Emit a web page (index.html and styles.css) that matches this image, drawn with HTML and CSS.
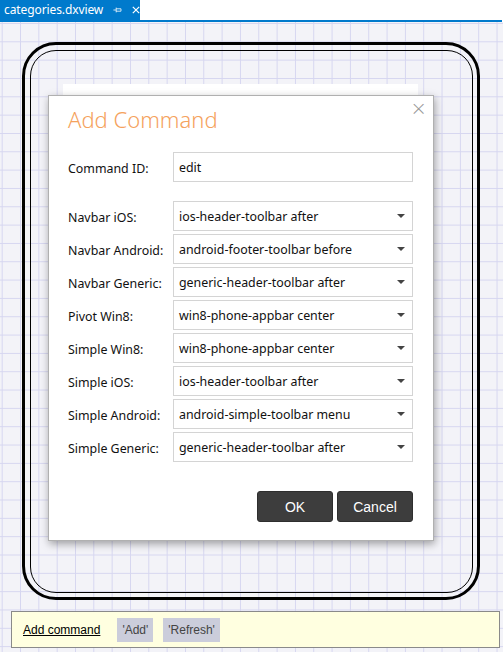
FILE: index.html
```html
<!DOCTYPE html>
<html>
<head>
<meta charset="utf-8">
<link rel="stylesheet" href="styles.css">
</head>
<body>
<div class="tabbar">
  <div class="tab">
    <span class="tab-title">categories.dxview</span>
    <svg class="pin" width="11" height="10" viewBox="0 0 11 10"><path d="M0.5 5h3.5M4 2v6M4 3.5h6v3H4" fill="none" stroke="#fff" stroke-width="1"/></svg>
    <svg class="tab-close" width="10" height="10" viewBox="0 0 10 10"><path d="M1 1l8 8M9 1l-8 8" stroke="#fff" stroke-width="1.5"/></svg>
  </div>
</div>
<div class="canvas">
  <div class="frame-outer">
    <div class="frame-inner">
      <div class="preview"><span class="preview-text">g</span></div>
    </div>
  </div>
  <div class="cmdbar">
    <a class="cmd-link">Add command</a>
    <span class="chip">'Add'</span>
    <span class="chip">'Refresh'</span>
  </div>
  <div class="dialog">
    <div class="dlg-close">×</div>
    <h1 class="dlg-title">Add Command</h1>
    <div class="row id-row">
      <label class="lbl">Command ID:</label>
      <div class="field">edit</div>
    </div>
    <div class="rows">
      <div class="row"><label class="lbl">Navbar iOS:</label><div class="field select">ios-header-toolbar after<span class="caret"></span></div></div>
      <div class="row"><label class="lbl">Navbar Android:</label><div class="field select">android-footer-toolbar before<span class="caret"></span></div></div>
      <div class="row"><label class="lbl">Navbar Generic:</label><div class="field select">generic-header-toolbar after<span class="caret"></span></div></div>
      <div class="row"><label class="lbl">Pivot Win8:</label><div class="field select">win8-phone-appbar center<span class="caret"></span></div></div>
      <div class="row"><label class="lbl">Simple Win8:</label><div class="field select">win8-phone-appbar center<span class="caret"></span></div></div>
      <div class="row"><label class="lbl">Simple iOS:</label><div class="field select">ios-header-toolbar after<span class="caret"></span></div></div>
      <div class="row"><label class="lbl">Simple Android:</label><div class="field select">android-simple-toolbar menu<span class="caret"></span></div></div>
      <div class="row"><label class="lbl">Simple Generic:</label><div class="field select">generic-header-toolbar after<span class="caret"></span></div></div>
    </div>
    <div class="buttons">
      <button class="btn">OK</button>
      <button class="btn">Cancel</button>
    </div>
  </div>
</div>
</body>
</html>
```
FILE: styles.css
```css
* { box-sizing: border-box; }
html, body { margin: 0; padding: 0; }
body {
  width: 503px;
  height: 652px;
  overflow: hidden;
  background: #fff;
  font-family: "Noto Sans", "Open Sans", sans-serif;
  position: relative;
}
.tabbar {
  height: 22px;
  border-bottom: 2px solid #007acc;
  display: flex;
  width: 502px;
}
.tab {
  background: #007acc;
  height: 20px;
  width: 140px;
  display: flex;
  align-items: center;
  padding-left: 4px;
  color: #fff;
}
.tab-title {
  font-size: 12px;
  line-height: 20px;
  letter-spacing: -0.1px;
}
.pin { margin-left: 10px; }
.tab-close { margin-left: 10px; }
.canvas {
  height: 630px;
  background-color: #f3f3f8;
  background-image:
    linear-gradient(to right, #d6d6f0 1px, transparent 1px),
    linear-gradient(to bottom, #d6d6f0 1px, transparent 1px);
  background-size: 18.33px 18.33px;
  background-position: 1.7px 1px;
  padding-top: 20px;
  padding-left: 22px;
}
.frame-outer {
  width: 458px;
  height: 558px;
  border: 3.5px solid #000;
  border-radius: 34px;
  padding: 4.5px;
}
.frame-inner {
  width: 100%;
  height: 100%;
  border: 1.5px solid #000;
  border-radius: 26px;
  padding: 33px 0 0 32px;
}
.preview {
  width: 355px;
  height: 455px;
  background: #fff;
  position: relative;
}
.preview-text {
  position: absolute;
  left: 55px;
  top: 440px;
  font-size: 12px;
  color: #555;
}
.cmdbar {
  margin-top: 11px;
  margin-left: -11px;
  width: 489px;
  height: 37px;
  background: #ffffe0;
  border: 1px solid #8a8a8a;
  display: flex;
  align-items: center;
  padding-left: 11px;
  font-family: "Liberation Sans", Arial, sans-serif;
  font-size: 12px;
  color: #000;
}
.cmd-link {
  text-decoration: underline;
  margin-right: 17px;
}
.chip {
  background: #cbcddb;
  color: #444;
  height: 24px;
  line-height: 24px;
  padding: 0 5px;
  margin-right: 10px;
}
.dialog {
  position: absolute;
  left: 48px;
  top: 95px;
  width: 386px;
  height: 446px;
  background: #fff;
  border: 1px solid #b0b0b0;
  box-shadow: 1px 3px 8px rgba(0,0,0,0.35);
  padding: 0 20px 0 19px;
}
.dlg-close {
  position: absolute;
  right: 6px;
  top: 0px;
  font-size: 20px;
  color: #999;
  font-family: "DejaVu Sans", sans-serif;
  font-weight: 300;
}
.dlg-title {
  margin: 8px 0 0 0;
  font-family: "Noto Sans", sans-serif;
  font-weight: 300;
  font-size: 22px;
  color: #f5a25d;
  line-height: 30px;
  height: 48px;
}
.row {
  display: flex;
  align-items: center;
  height: 30px;
}
.id-row { margin-bottom: 19px; }
.rows {
  display: flex;
  flex-direction: column;
  gap: 3px;
}
.lbl {
  width: 105px;
  font-size: 12.4px;
  color: #111;
  padding-top: 2px;
}
.field {
  width: 240px;
  height: 30px;
  border: 1px solid #d4d4d4;
  font-size: 12.4px;
  line-height: 28px;
  padding: 1px 0 0 5px;
  color: #111;
  position: relative;
}
.caret {
  position: absolute;
  right: 7px;
  top: 12px;
  width: 0;
  height: 0;
  border-left: 4px solid transparent;
  border-right: 4px solid transparent;
  border-top: 4px solid #444;
}
.buttons {
  margin-top: 29px;
  display: flex;
  justify-content: flex-end;
  gap: 4px;
}
.btn {
  width: 76px;
  height: 31px;
  background: #3d3d3d;
  color: #fff;
  border: 1px solid #2e2e2e;
  border-radius: 3px;
  font-family: "Liberation Sans", Arial, sans-serif;
  font-size: 14px;
  padding: 0;
}
```
